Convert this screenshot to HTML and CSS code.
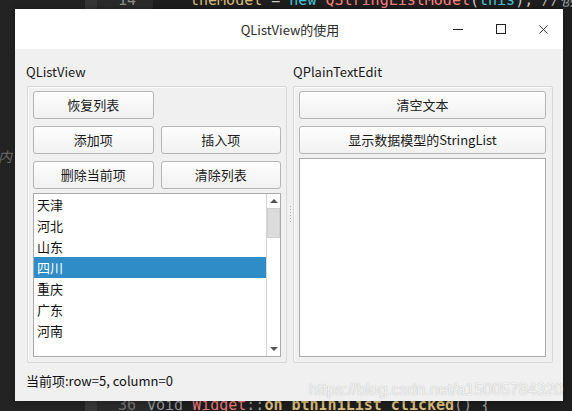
FILE: index.html
```html
<!DOCTYPE html>
<html lang="zh">
<head>
<meta charset="utf-8">
<title>QListView的使用</title>
<link rel="stylesheet" href="styles.css">
</head>
<body>
<div class="desktop">
  <div class="editor">
    <div class="side"><span class="side-text">内</span></div>
    <div class="strip"></div>
    <div class="gutter">
      <div class="ln ln-top">14</div>
      <div class="ln ln-bottom">36 <span class="fold">▾</span></div>
    </div>
    <div class="code">
      <div class="code-top"><span class="c-var">theModel</span> = <span class="c-kw">new</span> <span class="c-type">QStringListModel</span>(<span class="c-kw2">this</span>); <span class="c-com">//创建数据模型</span></div>
      <div class="code-bottom"><span class="c-kw3">void</span> <span class="c-cls">Widget</span>::<span class="c-fn">on_btnIniList_clicked</span>() {</div>
    </div>
  </div>

  <div class="window">
    <div class="titlebar">
      <span class="title">QListView的使用</span>
      <div class="controls">
        <svg class="ctl ctl-min" width="10" height="10" viewBox="0 0 10 10"><path d="M0 5.5H10" stroke="#222" stroke-width="1"/></svg>
        <svg class="ctl ctl-max" width="10" height="10" viewBox="0 0 10 10"><rect x="0.5" y="0.5" width="9" height="9" fill="none" stroke="#222" stroke-width="1"/></svg>
        <svg class="ctl ctl-close" width="10" height="10" viewBox="0 0 10 10"><path d="M0.5 0.5L9.5 9.5M9.5 0.5L0.5 9.5" stroke="#222" stroke-width="1"/></svg>
      </div>
    </div>
    <div class="client">
      <div class="splitter">
        <div class="pane">
          <div class="label">QListView</div>
          <div class="group">
            <div class="btn-grid">
              <button class="btn">恢复列表</button>
              <span></span>
              <button class="btn">添加项</button>
              <button class="btn">插入项</button>
              <button class="btn">删除当前项</button>
              <button class="btn">清除列表</button>
            </div>
            <div class="listview">
              <ul class="items">
                <li>天津</li>
                <li>河北</li>
                <li>山东</li>
                <li class="sel">四川</li>
                <li>重庆</li>
                <li>广东</li>
                <li>河南</li>
              </ul>
              <div class="vscroll">
                <div class="arrow up"></div>
                <div class="track"><div class="thumb"></div></div>
                <div class="arrow down"></div>
              </div>
            </div>
          </div>
        </div>
        <div class="handle"><span class="dots"></span></div>
        <div class="pane">
          <div class="label">QPlainTextEdit</div>
          <div class="group group-right">
            <button class="btn btn-wide">清空文本</button>
            <button class="btn btn-wide">显示数据模型的StringList</button>
            <div class="textedit"></div>
          </div>
        </div>
      </div>
      <div class="status">当前项:row=5, column=0</div>
    </div>
  </div>

  <div class="watermark">https://blog.csdn.net/a15005784320</div>
</div>
</body>
</html>
```

FILE: styles.css
```css
* { box-sizing: border-box; }
html, body { margin: 0; padding: 0; }
body {
  width: 572px;
  height: 411px;
  overflow: hidden;
  background: #1e1e1e;
  font-family: "Noto Sans CJK SC", "Noto Sans", sans-serif;
}
.desktop {
  position: relative;
  width: 572px;
  height: 411px;
  overflow: hidden;
}

/* background code editor */
.editor {
  display: flex;
  height: 411px;
}
.side {
  width: 85px;
  background: #232323;
  position: relative;
}
.side-text {
  position: absolute;
  left: -2px;
  top: 146px;
  font-style: italic;
  color: #6a6a6a;
  font-size: 14px;
}
.strip {
  width: 12px;
  background: #363636;
}
.gutter {
  width: 56px;
  background: #2a2a2a;
  position: relative;
}
.ln {
  position: absolute;
  font-family: "DejaVu Sans Mono", monospace;
  font-size: 15px;
  color: #8a8a8a;
}
.ln-top { left: 21px; top: -9px; }
.ln-bottom { left: 21px; top: 396px; color: #6f6f6f; }
.fold { font-size: 11px; margin-left: 6px; color: #6f6f6f; }
.code {
  flex: 1;
  background: #1e1e1e;
  position: relative;
}
.code-top, .code-bottom {
  position: absolute;
  white-space: nowrap;
  font-family: "DejaVu Sans Mono", monospace;
  font-size: 15px;
  color: #c8c8c8;
}
.code-top { left: 37px; top: -9px; }
.code-bottom { left: -6px; top: 396px; color: #9a9a9a; }
.c-var { color: #d6bb7a; }
.c-kw { color: #45c6d6; }
.c-type { color: #ff8080; }
.c-kw2 { color: #45c6d6; }
.c-com { color: #a8abb0; font-style: italic; }
.c-kw3 { color: #8d939a; }
.c-cls { color: #e87878; }
.c-fn { color: #d6bb7a; font-weight: bold; }

/* window */
.window {
  position: absolute;
  left: 15px;
  top: 9px;
  width: 548px;
  height: 392px;
  background: #f0f0f0;
  display: flex;
  flex-direction: column;
  box-shadow: 0 0 6px rgba(0,0,0,0.35);
}
.titlebar {
  height: 40px;
  background: #ffffff;
  display: flex;
  align-items: center;
  justify-content: center;
  position: relative;
}
.title {
  font-size: 13px;
  color: #2b2b2b;
  margin-left: 2px;
}
.controls {
  position: absolute;
  right: 15px;
  top: 15px;
  display: flex;
  align-items: center;
}
.ctl { display: block; }
.ctl-min { margin-right: 33px; margin-top: -1px; }
.ctl-max { margin-right: 33px; margin-top: 0px; }
.ctl-close { width: 9px; height: 9px; }

.client {
  flex: 1;
  padding: 14px 10px 11px 11px;
  display: flex;
  flex-direction: column;
}
.splitter {
  display: flex;
}
.pane {
  width: 261px;
  display: flex;
  flex-direction: column;
}
.pane:last-child { width: 260px; }
.label {
  font-size: 13px;
  line-height: 18px;
  height: 18px;
  color: #1a1a1a;
  margin-bottom: 5px;
}
.group {
  height: 277px;
  margin-left: 1px;
  border: 1px solid #d8d8d8;
  border-radius: 2px;
  box-shadow: inset 1px 1px 0 #fafafa;
  padding: 4px 5px 5px 5px;
  display: flex;
  flex-direction: column;
}
.pane:last-child .group { margin-left: 0; }
.group-right { padding: 4px 6px 5px 5px; }
.btn-grid {
  display: grid;
  grid-template-columns: 1fr 1fr;
  column-gap: 7px;
  row-gap: 7px;
  margin-bottom: 4px;
}
.btn {
  height: 28px;
  border: 1px solid #b5b5b5;
  border-radius: 3px;
  background: linear-gradient(#fefefe, #f1f1f1);
  font-family: "Noto Sans CJK SC", "Noto Sans", sans-serif;
  font-size: 13px;
  color: #1a1a1a;
  padding: 0;
  line-height: 26px;
  margin: 0;
}
.btn-wide { width: 100%; margin-bottom: 7px; }
.btn-wide + .btn-wide { margin-bottom: 4px; }

.listview {
  flex: 1;
  border: 1px solid #ababab;
  background: #ffffff;
  display: flex;
}
.items {
  list-style: none;
  margin: 0;
  padding: 0;
  flex: 1;
}
.items li {
  height: 21px;
  line-height: 21px;
  padding-left: 3px;
  font-size: 13px;
  color: #111;
}
.items li.sel {
  background: #308cc6;
  color: #ffffff;
}
.vscroll {
  width: 14px;
  border-left: 1px solid #d6d6d6;
  background: #ffffff;
  display: flex;
  flex-direction: column;
}
.arrow {
  height: 14px;
  display: flex;
  align-items: center;
  justify-content: center;
}
.arrow.up::before {
  content: "";
  border-left: 4px solid transparent;
  border-right: 4px solid transparent;
  border-bottom: 4px solid #555;
}
.arrow.down::before {
  content: "";
  border-left: 4px solid transparent;
  border-right: 4px solid transparent;
  border-top: 4px solid #555;
}
.track { flex: 1; }
.thumb {
  height: 30px;
  background: #dcdcdc;
  border: 1px solid #d0d0d0;
}

.handle {
  width: 6px;
  display: flex;
  justify-content: center;
}
.dots {
  display: block;
  width: 1px;
  height: 17px;
  margin-top: 143px;
  background: repeating-linear-gradient(#b0b0b0 0 1px, transparent 1px 3px);
}

.textedit {
  flex: 1;
  border: 1px solid #ababab;
  background: #ffffff;
}

.status {
  margin-top: 9px;
  font-size: 13px;
  line-height: 18px;
  height: 18px;
  color: #111;
}

.watermark {
  position: absolute;
  left: 309px;
  top: 380px;
  font-family: "Liberation Sans", Arial, sans-serif;
  font-size: 16px;
  line-height: 20px;
  color: rgba(255,255,255,0.85);
  text-shadow: 0 0 1px rgba(110,110,110,0.6);
  white-space: nowrap;
}
```
